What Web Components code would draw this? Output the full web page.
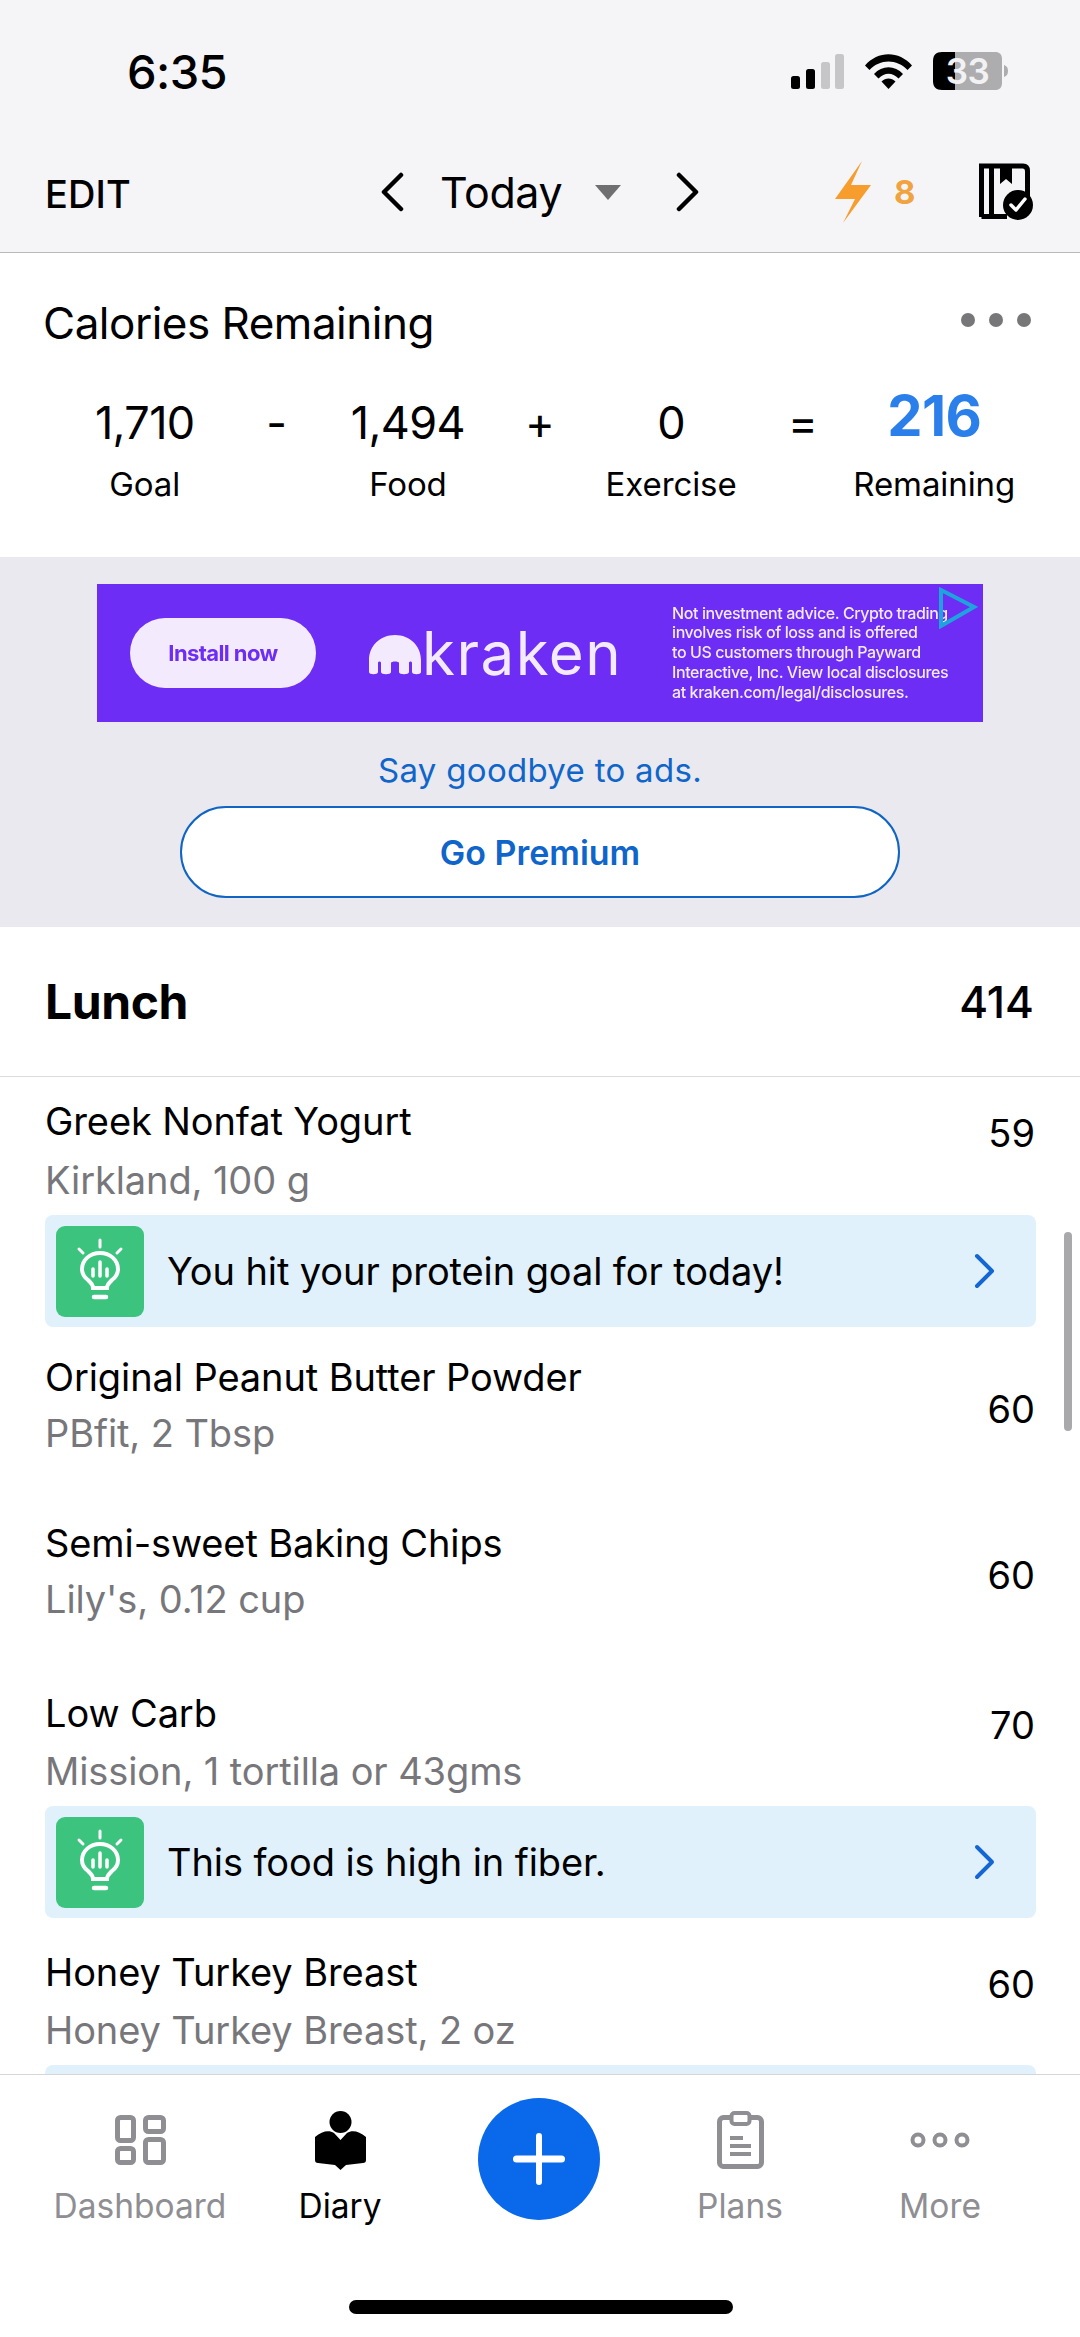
<!DOCTYPE html>
<html>
<head>
<meta charset="utf-8">
<title>Diary</title>
<style>
html, body { margin: 0; padding: 0; background: #fff; }
body { width: 1080px; height: 2337px; overflow: hidden; font-family: Inter, "Liberation Sans", sans-serif; color: #000; }
</style>
</head>
<body>
<diary-app>
  <status-bar></status-bar>
  <date-nav></date-nav>
  <calories-card></calories-card>
  <ad-band></ad-band>
  <meal-header name="Lunch" calories="414"></meal-header>
  <food-list>
    <food-item tip calories="59">
      <span slot="name">Greek Nonfat Yogurt</span>
      <span slot="detail">Kirkland, 100 g</span>
      <food-tip slot="tip">You hit your protein goal for today!</food-tip>
    </food-item>
    <food-item calories="60" style="--top:28px;--gap:12px;--bottom:33px">
      <span slot="name">Original Peanut Butter Powder</span>
      <span slot="detail">PBfit, 2 Tbsp</span>
    </food-item>
    <food-item calories="60" style="--top:33px;--gap:12px;--bottom:35px">
      <span slot="name">Semi-sweet Baking Chips</span>
      <span slot="detail">Lily's, 0.12 cup</span>
    </food-item>
    <food-item tip calories="70" style="--top:35px;--gap:14px">
      <span slot="name">Low Carb</span>
      <span slot="detail">Mission, 1 tortilla or 43gms</span>
      <food-tip slot="tip">This food is high in fiber.</food-tip>
    </food-item>
    <food-item tip calories="60" style="--top:32px;--gap:14px">
      <span slot="name">Honey Turkey Breast</span>
      <span slot="detail">Honey Turkey Breast, 2 oz</span>
      <food-tip slot="tip"></food-tip>
    </food-item>
  </food-list>
  <tab-bar>
    <tab-item label="Dashboard">
      <svg width="51" height="50" viewBox="0 0 51 50" fill="none" stroke="#8e8e93" stroke-width="5">
        <rect x="2.500" y="2.500" width="16" height="23" rx="3"/>
        <rect x="2.500" y="33.500" width="16" height="14" rx="3"/>
        <rect x="30.500" y="2.500" width="18" height="14" rx="3"/>
        <rect x="30.500" y="24.500" width="18" height="23" rx="3"/>
      </svg>
    </tab-item>
    <tab-item label="Diary" active>
      <svg width="51" height="59" viewBox="0 0 51 59">
        <ellipse cx="25.500" cy="11" rx="11" ry="11"/>
        <path d="M0 26C7 20 14 19 19 22L25.500 29L32 22C37 19 44 20 51 26V49C51 51 50 52 48 52L31 54L25.500 59L20 54L3 52C1 52 0 51 0 49Z"/>
      </svg>
    </tab-item>
    <add-button></add-button>
    <tab-item label="Plans">
      <svg width="47" height="58" viewBox="0 0 47 58" fill="none" stroke="#8e8e93">
        <rect x="2.500" y="6.500" width="42" height="49" rx="4" stroke-width="5"/>
        <rect x="14.500" y="2" width="18" height="11" rx="3" fill="#fff" stroke-width="4"/>
        <path d="M13 27H26M13 35H34M13 43H34" stroke-width="4"/>
      </svg>
    </tab-item>
    <tab-item label="More">
      <svg width="60" height="16" viewBox="0 0 60 16" fill="none" stroke="#8e8e93" stroke-width="4">
        <circle cx="8" cy="8" r="5.500"/>
        <circle cx="30" cy="8" r="5.500"/>
        <circle cx="52" cy="8" r="5.500"/>
      </svg>
    </tab-item>
  </tab-bar>
</diary-app>

<script>
function shadowTemplate(html) {
  const template = document.createElement('template');
  template.innerHTML = html;
  return template;
}

class Base extends HTMLElement {
  constructor() {
    super();
    this.attachShadow({ mode: 'open' });
    this.shadowRoot.appendChild(this.constructor.template.content.cloneNode(true));
  }
}

class DiaryApp extends Base {
  static template = shadowTemplate(`
<style>
:host { display: flex; flex-direction: column; width: 1080px; height: 2337px; background: #fff; }
</style>
<slot></slot>
`);
}

class StatusBar extends Base {
  static template = shadowTemplate(`
<style>
:host { display: flex; align-items: center; height: 130px; padding: 6px 72px 0 127px; background: #f5f5f8; }
.time { font-size: 47px; font-weight: 500; letter-spacing: -0.6px; }
.icons { margin-left: auto; display: flex; align-items: center; gap: 21px; }
.battery { position: relative; width: 75px; height: 38px; display: block; }
.battery span { position: absolute; left: 0; top: 0; width: 69px; line-height: 38px; text-align: center; font-size: 35px; font-weight: 600; letter-spacing: -0.5px; color: #f2f2f4; }
svg { display: block; }
</style>
<div class="time">6:35</div>
<div class="icons">
  <svg width="53" height="35" viewBox="0 0 53 35">
    <rect x="0" y="22" width="9" height="13" rx="2.500"/>
    <rect x="15" y="15" width="9" height="20" rx="2.500"/>
    <rect x="30" y="8" width="9" height="27" rx="2.500" fill="#c6c6c8"/>
    <rect x="44" y="0" width="9" height="35" rx="2.500" fill="#c6c6c8"/>
  </svg>
  <svg width="47" height="35" viewBox="0 0 47 35">
    <path d="M0 11.500C13 -3.500 34 -3.500 47 11.500L42.500 16C32 4.500 15 4.500 4.500 16Z"/>
    <path d="M9 20C17 11 30 11 38 20L33.500 24.500C27.500 18 19.500 18 13.500 24.500Z"/>
    <path d="M16.500 27.500C20.500 23.500 26.500 23.500 30.500 27.500L23.500 35Z"/>
  </svg>
  <div class="battery">
    <svg width="75" height="38" viewBox="0 0 75 38">
      <path d="M22 0H62C66.500 0 69 2.500 69 7V31C69 35.500 66.500 38 62 38H22Z" fill="#adadaf"/>
      <path d="M9 0H22V38H9C3 38 0 35 0 29V9C0 3 3 0 9 0Z"/>
      <path d="M71 13C74 14 75 16 75 19C75 22 74 24 71 25Z" fill="#adadaf"/>
    </svg>
    <span>33</span>
  </div>
</div>
`);
}

class DateNav extends Base {
  static template = shadowTemplate(`
<style>
:host { display: grid; grid-template-columns: 335px 320px 1fr; align-items: center; height: 112px; padding: 0 49px 4px 45px; background: #f5f5f8; border-bottom: 1px solid #b9b9bd; }
.edit { font-size: 38px; font-weight: 500; margin-top: 4px; letter-spacing: 0.1px; }
.center { display: flex; align-items: center; }
.today { font-size: 43px; font-weight: 400; margin-left: 36px; letter-spacing: -0.4px; }
.caret { width: 0; height: 0; margin-left: 33px; border-style: solid; border-width: 15px 13.500px 0; border-color: #6f6f72 transparent transparent; }
.next { margin-left: auto; }
.right { display: flex; align-items: center; margin-left: 135px; }
.count { font-size: 33px; font-weight: 700; color: #f0a33e; margin-left: 23px; }
.plan { margin-left: 64px; }
svg { display: block; }
</style>
<div class="edit">EDIT</div>
<div class="center">
  <svg width="24" height="40" viewBox="0 0 24 40" fill="none" stroke="#000" stroke-width="4.500" stroke-linecap="round" stroke-linejoin="round"><path d="M21 3L4 20L21 37"/></svg>
  <span class="today">Today</span>
  <span class="caret"></span>
  <svg class="next" width="24" height="40" viewBox="0 0 24 40" fill="none" stroke="#000" stroke-width="4.500" stroke-linecap="round" stroke-linejoin="round"><path d="M3 3L20 20L3 37"/></svg>
</div>
<div class="right">
  <svg width="36" height="62" viewBox="0 0 36 62" fill="#f69d2d"><path d="M27 0L0 38H20L8 62L36 24H16Z"/></svg>
  <span class="count">8</span>
  <svg class="plan" width="54" height="58" viewBox="0 0 54 58">
    <path d="M2.500 54V3H44C47 3 48.500 5 48.500 8V38M2.500 53.500H28M12.500 3V53" fill="none" stroke="#000" stroke-width="5"/>
    <path d="M21 3H33V21L27 16L21 21Z"/>
    <circle cx="39" cy="42" r="15"/>
    <path d="M32 42L37 47L46 36" fill="none" stroke="#fff" stroke-width="3.500" stroke-linecap="round" stroke-linejoin="round"/>
  </svg>
</div>
`);
}

class CaloriesCard extends Base {
  static template = shadowTemplate(`
<style>
:host { display: block; height: 304px; box-sizing: border-box; padding-top: 46px; background: #fff; }
.head { display: flex; justify-content: space-between; padding: 0 49px 0 43px; height: 48px; line-height: 48px; font-size: 44px; letter-spacing: -0.5px; }
.dots { display: flex; gap: 14px; height: 14px; margin-top: 14px; }
.dots i { width: 14px; height: 14px; border-radius: 50%; background: #77777a; }
.stats { display: grid; grid-template-columns: repeat(7, minmax(0, 1fr)); margin: 44px 80px 0 79px; }
.num { display: flex; justify-content: center; height: 64px; line-height: 64px; font-size: 45px; letter-spacing: -0.6px; white-space: nowrap; }
.num.big { box-sizing: border-box; height: 64px; line-height: 50px; padding-bottom: 14px; font-size: 56px; font-weight: 700; color: #2b7fea; }
.label { display: flex; justify-content: center; margin-top: 9px; line-height: 40px; font-size: 33px; white-space: nowrap; letter-spacing: -0.1px; grid-row: 2; }
</style>
<div class="head"><span>Calories Remaining</span><div class="dots"><i></i><i></i><i></i></div></div>
<div class="stats">
  <div class="num">1,710</div><div class="num">-</div>
  <div class="num">1,494</div><div class="num">+</div>
  <div class="num">0</div><div class="num">=</div>
  <div class="num big">216</div>
  <div class="label">Goal</div><div class="label"></div>
  <div class="label">Food</div><div class="label"></div>
  <div class="label">Exercise</div><div class="label"></div>
  <div class="label">Remaining</div>
</div>
`);
}

class AdBand extends Base {
  static template = shadowTemplate(`
<style>
:host { display: block; height: 370px; box-sizing: border-box; padding-top: 27px; background: #e9e9ef; }
.ad { position: relative; display: flex; align-items: center; width: 886px; height: 138px; margin-left: 97px; background: #6d2df4; color: #f3ebfd; overflow: hidden; }
.pill { flex: none; width: 186px; height: 70px; margin-left: 33px; border-radius: 35px; background: #f3ebfd; color: #6d2df4; font-size: 22px; font-weight: 700; line-height: 70px; text-align: center; letter-spacing: -0.6px; filter: blur(0.7px); }
.logo { display: flex; align-items: center; gap: 1px; margin-left: 53px; font-size: 60px; font-weight: 400; letter-spacing: 1.500px; width: 252px; line-height: 70px; filter: blur(0.7px); }
.logo svg { flex: none; margin-top: 4px; }
.legal { margin-left: 51px; font-size: 16px; line-height: 19.800px; white-space: nowrap; letter-spacing: -0.400px; font-weight: 500; filter: blur(0.7px); }
.choice { position: absolute; top: 3px; right: 5px; }
.say { margin-top: 26px; line-height: 44px; font-size: 33px; text-align: center; color: #0f65c9; letter-spacing: 0.3px; }
.btn { box-sizing: border-box; width: 720px; height: 92px; margin: 14px 0 0 180px; border: 2.500px solid #1064c4; border-radius: 46px; background: #fff; color: #0f65c9; font-size: 34px; font-weight: 600; line-height: 89px; text-align: center; }
</style>
<div class="ad">
  <div class="pill">Install now</div>
  <div class="logo">
    <svg width="52" height="40" viewBox="0 0 52 40" fill="#f3ebfd"><path d="M26 0C11 0 0 11 0 25V37C0 40 9 40 9 37V28C9 26 12 26 12 28V37C12 40 22 40 22 37V28C22 26 30 26 30 28V37C30 40 40 40 40 37V28C40 26 43 26 43 28V37C43 40 52 40 52 37V25C52 11 41 0 26 0Z"/></svg>
    <span>kraken</span>
  </div>
  <div class="legal">Not investment advice. Crypto trading<br>involves risk of loss and is offered<br>to US customers through Payward<br>Interactive, Inc. View local disclosures<br>at kraken.com/legal/disclosures.</div>
  <svg class="choice" width="40" height="42" viewBox="0 0 40 42" fill="none" stroke="#1ea3dc" stroke-width="4"><path d="M3 3V39L36 20Z"/></svg>
</div>
<div class="say">Say goodbye to ads.</div>
<div class="btn">Go Premium</div>
`);
}

class MealHeader extends Base {
  static template = shadowTemplate(`
<style>
:host { display: flex; align-items: center; justify-content: space-between; height: 149px; padding: 0 46px 0 45px; border-bottom: 1px solid #dcdcde; background: #fff; }
.name { font-size: 48px; font-weight: 700; letter-spacing: -0.4px; }
.cal { font-size: 44px; font-weight: 500; }
</style>
<span class="name"></span><span class="cal"></span>
`);
  connectedCallback() {
    this.shadowRoot.querySelector('.name').textContent = this.getAttribute('name');
    this.shadowRoot.querySelector('.cal').textContent = this.getAttribute('calories');
  }
}

class FoodList extends Base {
  static template = shadowTemplate(`
<style>
:host { display: block; position: relative; flex: 1; min-height: 0; overflow: hidden; background: #fff; }
.scroll { position: absolute; top: 155px; right: 8px; width: 8px; height: 199px; border-radius: 4px; background: #a9a9ab; }
</style>
<slot></slot>
<div class="scroll"></div>
`);
}

class FoodItem extends Base {
  static template = shadowTemplate(`
<style>
:host { display: block; padding: var(--top, 22px) 45px var(--bottom, 0); }
.row { display: flex; justify-content: space-between; }
.name, .detail { font-size: 38px; line-height: 44px; letter-spacing: -0.1px; white-space: nowrap; }
.detail { margin-top: var(--gap, 15px); color: #77777b; }
.cal { font-size: 38px; line-height: 44px; margin-top: 32px; }
:host([tip]) .cal { margin-top: 12px; }
::slotted(food-tip) { margin-top: 13px; }
</style>
<div class="row">
  <div><div class="name"><slot name="name"></slot></div><div class="detail"><slot name="detail"></slot></div></div>
  <div class="cal"></div>
</div>
<slot name="tip"></slot>
`);
  connectedCallback() {
    this.shadowRoot.querySelector('.cal').textContent = this.getAttribute('calories');
  }
}

class FoodTip extends Base {
  static template = shadowTemplate(`
<style>
:host { display: flex; align-items: center; height: 112px; margin-right: -1px; padding: 0 41px 0 11px; border-radius: 8px; background: #e1f1fc; font-size: 38px; letter-spacing: -0.1px; }
.icon { flex: none; display: block; border-radius: 9px; background: #3cc47f; }
.text { flex: 1; margin-left: 23px; white-space: nowrap; }
.go { flex: none; display: block; }
</style>
<svg class="icon" width="88" height="91" viewBox="0 0 88 91" fill="none" stroke="#fff" stroke-linecap="round">
  <path d="M44 14V21M23 23L27 27M65 23L61 27" stroke-width="3"/>
  <path d="M37 62C37 58 35 57 32 54C28 51 26 48 26 43C26 34 34 27 44 27C54 27 62 34 62 43C62 48 60 51 56 54C53 57 51 58 51 62Z" stroke-width="4"/>
  <path d="M37 43V50M44 36V50M51 43V50" stroke-width="3.500"/>
  <path d="M38 71H50" stroke-width="4.500"/>
</svg>
<span class="text"><slot></slot></span>
<svg class="go" width="22" height="36" viewBox="0 0 22 36" fill="none" stroke="#1466d3" stroke-width="4" stroke-linecap="round" stroke-linejoin="round"><path d="M4 3L19 18L4 33"/></svg>
`);
}

class TabBar extends Base {
  static template = shadowTemplate(`
<style>
:host { display: block; flex: none; height: 262px; border-top: 1px solid #d6d6d8; background: #fff; }
.tabs { display: grid; grid-template-columns: repeat(5, 200px); padding-left: 40px; height: 150px; }
.home { width: 384px; height: 14px; margin: 75px 0 0 349px; border-radius: 7px; background: #000; }
</style>
<div class="tabs"><slot></slot></div>
<div class="home"></div>
`);
}

class TabItem extends Base {
  static template = shadowTemplate(`
<style>
:host { display: block; padding-top: 19px; text-align: center; color: #8e8e93; }
:host([active]) { color: #000; }
.icon { display: flex; align-items: center; justify-content: center; height: 92px; }
.label { line-height: 40px; font-size: 33.500px; white-space: nowrap; }
</style>
<div class="icon"><slot></slot></div>
<div class="label"></div>
`);
  connectedCallback() {
    this.shadowRoot.querySelector('.label').textContent = this.getAttribute('label');
  }
}

class AddButton extends Base {
  static template = shadowTemplate(`
<style>
:host { display: flex; align-items: center; justify-content: center; width: 122px; height: 122px; margin: 23px 0 0 38px; border-radius: 50%; background: #0a69ea; }
svg { display: block; }
</style>
<svg width="52" height="52" viewBox="0 0 52 52" fill="#fff"><rect x="0" y="22.500" width="52" height="7" rx="3.500"/><rect x="23" y="0" width="6" height="52" rx="3"/></svg>
`);
}

customElements.define('diary-app', DiaryApp);
customElements.define('status-bar', StatusBar);
customElements.define('date-nav', DateNav);
customElements.define('calories-card', CaloriesCard);
customElements.define('ad-band', AdBand);
customElements.define('meal-header', MealHeader);
customElements.define('food-list', FoodList);
customElements.define('food-item', FoodItem);
customElements.define('food-tip', FoodTip);
customElements.define('tab-bar', TabBar);
customElements.define('tab-item', TabItem);
customElements.define('add-button', AddButton);
</script>
</body>
</html>
